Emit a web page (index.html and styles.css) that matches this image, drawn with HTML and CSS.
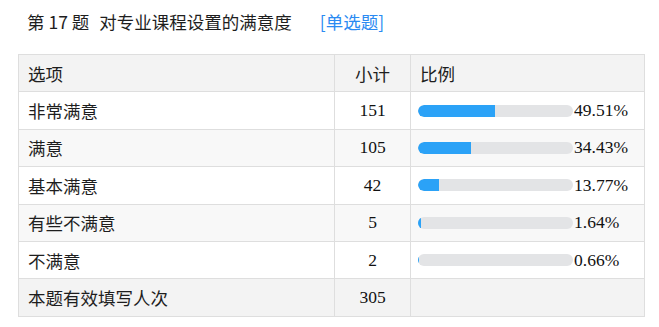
FILE: index.html
```html
<!DOCTYPE html>
<html lang="zh">
<head>
<meta charset="utf-8">
<link rel="stylesheet" href="styles.css">
</head>
<body>
<div class="wrap">
  <div class="title">
    <span class="qno">第 17 题</span>
    <span class="qtext">对专业课程设置的满意度</span>
    <span class="qtype">[单选题]</span>
  </div>
  <table class="stats">
    <colgroup><col class="c1"><col class="c2"><col class="c3"></colgroup>
    <thead>
      <tr><th class="opt">选项</th><th class="cnt">小计</th><th class="pct">比例</th></tr>
    </thead>
    <tbody>
      <tr><td class="opt">非常满意</td><td class="cnt">151</td><td class="pct"><div class="bar"><div class="track"><div class="fill" style="width:49.51%"></div></div><span class="val">49.51%</span></div></td></tr>
      <tr><td class="opt">满意</td><td class="cnt">105</td><td class="pct"><div class="bar"><div class="track"><div class="fill" style="width:34.43%"></div></div><span class="val">34.43%</span></div></td></tr>
      <tr><td class="opt">基本满意</td><td class="cnt">42</td><td class="pct"><div class="bar"><div class="track"><div class="fill" style="width:13.77%"></div></div><span class="val">13.77%</span></div></td></tr>
      <tr><td class="opt">有些不满意</td><td class="cnt">5</td><td class="pct"><div class="bar"><div class="track"><div class="fill" style="width:1.64%"></div></div><span class="val">1.64%</span></div></td></tr>
      <tr><td class="opt">不满意</td><td class="cnt">2</td><td class="pct"><div class="bar"><div class="track"><div class="fill" style="width:0.66%"></div></div><span class="val">0.66%</span></div></td></tr>
    </tbody>
    <tfoot>
      <tr><td class="opt">本题有效填写人次</td><td class="cnt">305</td><td class="pct"></td></tr>
    </tfoot>
  </table>
</div>
</body>
</html>
```

FILE: styles.css
```css
html, body {
  margin: 0;
  padding: 0;
  background: #ffffff;
}

.wrap {
  padding: 10px 16px 0 18px;
  font-family: "Noto Sans CJK SC", "Liberation Sans", sans-serif;
  color: #1e1e1e;
}

.title {
  display: flex;
  align-items: center;
  height: 24px;
  font-size: 17.5px;
  line-height: 24px;
  padding-left: 9px;
  margin-bottom: 20px;
}

.qno {
  margin-right: 10px;
}

.qtext {
  margin-right: 28px;
}

.qtype {
  color: #2a8af2;
}

.stats {
  border-collapse: collapse;
  width: 626px;
  table-layout: fixed;
  font-size: 17.5px;
}

.c1 { width: 316px; }
.c2 { width: 76px; }
.c3 { width: 234px; }

.stats th,
.stats td {
  border: 1px solid #dedede;
  height: 37.4px;
  padding: 0 8px 0 9px;
  vertical-align: middle;
  font-weight: normal;
  text-align: left;
  box-sizing: border-box;
}

.stats thead tr,
.stats tfoot tr {
  background: #f3f3f3;
}

.stats tbody tr:nth-child(even) {
  background: #f8f8f8;
}

.stats .cnt {
  text-align: center;
  padding: 0;
  font-family: "Liberation Serif", "Noto Sans CJK SC", serif;
  font-size: 17.5px;
  color: #111111;
}

.stats th.cnt {
  font-family: "Noto Sans CJK SC", sans-serif;
  color: #1e1e1e;
}

.stats td.pct {
  padding-left: 7px;
  padding-right: 0;
}

.bar {
  display: flex;
  align-items: center;
}

.track {
  width: 155px;
  height: 12px;
  border-radius: 6px;
  background: #e3e4e6;
  overflow: hidden;
  flex: none;
}

.fill {
  height: 100%;
  background: #2ba2f7;
  border-radius: 6px 0 0 6px;
}

.val {
  font-family: "Liberation Serif", serif;
  font-size: 17.5px;
  color: #111111;
  margin-left: 1px;
}
```
